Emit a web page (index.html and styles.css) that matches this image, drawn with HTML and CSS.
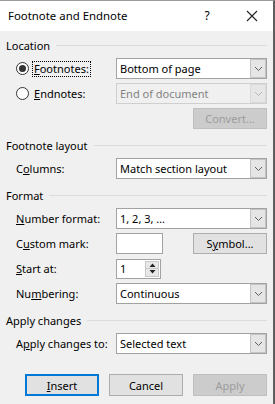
FILE: index.html
```html
<!DOCTYPE html>
<html>
<head>
<meta charset="utf-8">
<link rel="stylesheet" href="styles.css">
</head>
<body>
<div class="dialog">
  <div class="titlebar">
    <span class="title">Footnote and Endnote</span>
    <span class="help">?</span>
    <span class="close"><svg width="12" height="12" viewBox="0 0 12 12"><path d="M1 1L11 11M11 1L1 11" stroke="#222" stroke-width="1.1" fill="none"/></svg></span>
  </div>
  <div class="content">
    <div class="group-head"><span>Location</span><i class="rule"></i></div>
    <div class="rows">
      <div class="row">
        <label class="radio-label"><span class="radio checked"></span><span class="focus"><u>F</u>ootnotes:</span></label>
        <div class="select"><span class="value">Bottom of page</span><span class="arrow"><svg width="9" height="6" viewBox="0 0 9 6"><path d="M1 1L4.5 4.5L8 1" stroke="#606060" stroke-width="1" fill="none"/></svg></span></div>
      </div>
      <div class="row">
        <label class="radio-label"><span class="radio"></span><span class="plain"><u>E</u>ndnotes:</span></label>
        <div class="select disabled"><span class="value">End of document</span><span class="arrow"><svg width="9" height="6" viewBox="0 0 9 6"><path d="M1 1L4.5 4.5L8 1" stroke="#b8b8b8" stroke-width="1" fill="none"/></svg></span></div>
      </div>
      <div class="row end">
        <button class="btn disabled">Convert...</button>
      </div>
    </div>

    <div class="group-head"><span>Footnote layout</span><i class="rule"></i></div>
    <div class="rows">
      <div class="row">
        <span class="label">C<u>o</u>lumns:</span>
        <div class="select"><span class="value">Match section layout</span><span class="arrow"><svg width="9" height="6" viewBox="0 0 9 6"><path d="M1 1L4.5 4.5L8 1" stroke="#606060" stroke-width="1" fill="none"/></svg></span></div>
      </div>
    </div>

    <div class="group-head"><span>Format</span><i class="rule"></i></div>
    <div class="rows">
      <div class="row">
        <span class="label"><u>N</u>umber format:</span>
        <div class="select"><span class="value">1, 2, 3, …</span><span class="arrow"><svg width="9" height="6" viewBox="0 0 9 6"><path d="M1 1L4.5 4.5L8 1" stroke="#606060" stroke-width="1" fill="none"/></svg></span></div>
      </div>
      <div class="row">
        <span class="label">C<u>u</u>stom mark:</span>
        <div class="pair">
          <div class="textbox mark"></div>
          <button class="btn">S<u>y</u>mbol...</button>
        </div>
      </div>
      <div class="row">
        <span class="label"><u>S</u>tart at:</span>
        <div class="textbox spin"><span class="value">1</span>
          <span class="spinner">
            <span class="sp up"><svg width="7" height="4" viewBox="0 0 7 4"><path d="M0.5 4L3.5 0.5L6.5 4Z" fill="#222"/></svg></span>
            <span class="sp down"><svg width="7" height="4" viewBox="0 0 7 4"><path d="M0.5 0L3.5 3.5L6.5 0Z" fill="#222"/></svg></span>
          </span>
        </div>
      </div>
      <div class="row">
        <span class="label">Nu<u>m</u>bering:</span>
        <div class="select"><span class="value">Continuous</span><span class="arrow"><svg width="9" height="6" viewBox="0 0 9 6"><path d="M1 1L4.5 4.5L8 1" stroke="#606060" stroke-width="1" fill="none"/></svg></span></div>
      </div>
    </div>

    <div class="group-head"><span>Apply changes</span><i class="rule"></i></div>
    <div class="rows">
      <div class="row">
        <span class="label">A<u>p</u>ply changes to:</span>
        <div class="select"><span class="value">Selected text</span><span class="arrow"><svg width="9" height="6" viewBox="0 0 9 6"><path d="M1 1L4.5 4.5L8 1" stroke="#606060" stroke-width="1" fill="none"/></svg></span></div>
      </div>
    </div>

    <div class="buttons">
      <button class="btn default"><u>I</u>nsert</button>
      <button class="btn">Cancel</button>
      <button class="btn disabled">Apply</button>
    </div>
  </div>
</div>
</body>
</html>
```

FILE: styles.css
```css
* { box-sizing: border-box; }
html, body { margin: 0; padding: 0; }
body {
  background: #f0f0f0;
  font-family: "Noto Sans", "Open Sans", sans-serif;
  font-size: 11px;
  color: #000;
}
.dialog {
  width: 275px;
  height: 404px;
  background: #f0f0f0;
  border-top: 1px solid #9a9a9a;
  border-right: 2px solid #5e5e5e;
  display: flex;
  flex-direction: column;
}
.titlebar {
  height: 30px;
  background: #fff;
  display: flex;
  align-items: center;
  padding-left: 8px;
}
.title { font-size: 11.4px; flex: 1; padding-bottom: 2px; }
.help { width: 20px; text-align: center; font-size: 12px; margin-right: 29px; padding-bottom: 2px; }
.close { width: 12px; display: flex; margin-right: 15px; }
.content {
  padding: 6px 6px 0 6px;
  display: flex;
  flex-direction: column;
}
.group-head {
  height: 16px;
  display: flex;
  align-items: center;
  margin-bottom: 5px;
}
.group-head .rule {
  flex: 1;
  height: 1px;
  background: #dcdcdc;
  margin-left: 6px;
}
.rows {
  display: flex;
  flex-direction: column;
  gap: 4px;
  margin-bottom: 8px;
}
.row {
  height: 21px;
  display: grid;
  grid-template-columns: 100px 151px;
  align-items: center;
  padding-left: 10px;
}
.row.end { display: flex; justify-content: flex-end; }
.radio-label { display: flex; align-items: center; }
.radio {
  width: 13px; height: 13px;
  border: 1px solid #333;
  border-radius: 50%;
  background: #fff;
  margin-right: 3px;
  display: flex; align-items: center; justify-content: center;
}
.radio.checked::after {
  content: "";
  width: 7px; height: 7px;
  border-radius: 50%;
  background: #333;
}
.focus { border: 1px dotted #000; padding: 0 1px; line-height: 14px; }
.plain { padding: 0 2px; line-height: 14px; }
.select {
  height: 21px;
  background: #fff;
  border: 1px solid #a2a2a2;
  display: flex;
  align-items: center;
}
.select .value { flex: 1; padding-left: 3px; white-space: nowrap; }
.select .arrow {
  width: 16px;
  height: 19px;
  background: #e5e5e5;
  border: 1px solid #c4c4c4;
  display: flex; align-items: center; justify-content: center;
}
.select.disabled { background: #f0f0f0; border-color: #cfcfcf; color: #838383; }
.select.disabled .arrow { background: #e6e6e6; border-color: #dadada; }
.btn {
  width: 74px;
  height: 21px;
  background: #e1e1e1;
  border: 1px solid #adadad;
  font: inherit;
  color: #000;
  padding: 0;
}
.btn.disabled { background: #cccccc; border-color: #bfbfbf; color: #9c9c9c; }
.btn.default { border: 2px solid #0078d7; }
.pair { display: flex; justify-content: space-between; align-items: center; }
.textbox {
  height: 21px;
  background: #fff;
  border: 1px solid #a2a2a2;
}
.textbox.mark { width: 47px; }
.textbox.spin {
  width: 45px;
  height: 20px;
  display: flex;
  align-items: center;
}
.textbox.spin .value { flex: 1; padding-left: 3px; }
.spinner {
  width: 14px;
  height: 16px;
  margin-right: 1px;
  display: flex;
  flex-direction: column;
  gap: 1px;
  border: 1px solid #c8c8c8;
  background: #c8c8c8;
}
.sp { flex: 1; background: #e8e8e8; display: flex; align-items: center; justify-content: center; }
.buttons {
  margin-top: 12px;
  display: flex;
  justify-content: flex-end;
  gap: 10px;
  height: 22px;
}
.buttons .btn { height: 22px; }
```
